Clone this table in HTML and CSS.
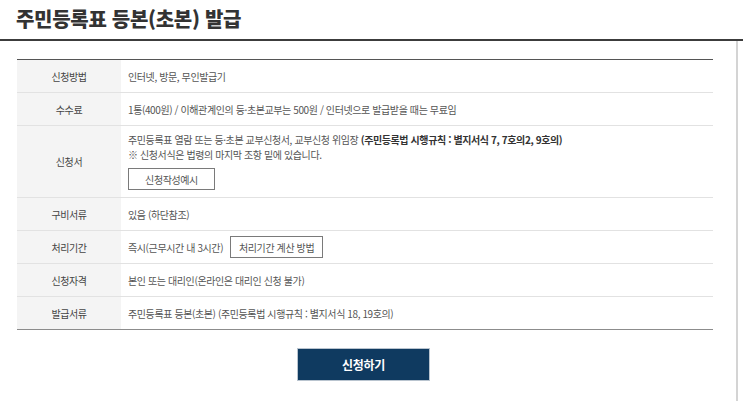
FILE: index.html
```html
<!DOCTYPE html>
<html lang="ko">
<head>
<meta charset="utf-8">
<title>주민등록표 등본(초본) 발급</title>
<link rel="stylesheet" href="styles.css">
</head>
<body>
<header class="head">
  <h1 class="title">주민등록표 등본(초본) 발급</h1>
</header>
<main class="body">
  <div class="table">
    <div class="row">
      <div class="th">신청방법</div>
      <div class="td">인터넷, 방문, 무인발급기</div>
    </div>
    <div class="row">
      <div class="th">수수료</div>
      <div class="td">1통(400원) / 이해관계인의 등·초본교부는 500원 / 인터넷으로 발급받을 때는 무료임</div>
    </div>
    <div class="row">
      <div class="th">신청서</div>
      <div class="td td-multi">
        <p class="line">주민등록표 열람 또는 등·초본 교부신청서, 교부신청 위임장 <b class="strong">(주민등록법 시행규칙 : 별지서식 7, 7호의2, 9호의)</b></p>
        <p class="line">※ 신청서식은 법령의 마지막 조항 밑에 있습니다.</p>
        <button class="btn btn-sample" type="button">신청작성예시</button>
      </div>
    </div>
    <div class="row">
      <div class="th">구비서류</div>
      <div class="td">있음 (하단참조)</div>
    </div>
    <div class="row">
      <div class="th">처리기간</div>
      <div class="td">즉시(근무시간 내 3시간)<button class="btn btn-calc" type="button">처리기간 계산 방법</button></div>
    </div>
    <div class="row">
      <div class="th">신청자격</div>
      <div class="td">본인 또는 대리인(온라인은 대리인 신청 불가)</div>
    </div>
    <div class="row row-last">
      <div class="th">발급서류</div>
      <div class="td">주민등록표 등본(초본) (주민등록법 시행규칙 : 별지서식 18, 19호의)</div>
    </div>
  </div>
  <div class="actions">
    <button class="submit" type="button">신청하기</button>
  </div>
</main>
</body>
</html>
```
FILE: styles.css
```css
* { box-sizing: border-box; }
html, body { margin: 0; padding: 0; background: #fff; }
body {
  font-family: "Noto Sans CJK KR", "Noto Sans", sans-serif;
  color: #555;
  width: 743px;
  height: 401px;
  overflow: hidden;
}
.head {
  height: 41px;
  padding: 7px 0 0 16px;
  border-bottom: 2px solid #3c3c3c;
}
.title {
  margin: 0;
  font-size: 20px;
  line-height: 24px;
  font-weight: 900;
  letter-spacing: -0.3px;
  color: #333;
}
.body {
  width: 738px;
  height: 360px;
  padding: 18px 0 0 17px;
  border-right: 2px solid #d4d4d4;
}
.table {
  width: 696px;
  border-top: 1px solid #555;
}
.row {
  display: grid;
  grid-template-columns: 104px 1fr;
  border-bottom: 1px solid #e2e2e2;
}
.row-last { border-bottom: 1px solid #8c8c8c; }
.th {
  background: #f4f4f4;
  display: flex;
  align-items: center;
  justify-content: center;
  min-height: 32px;
  font-size: 10px;
  letter-spacing: -0.4px;
  color: #444;
}
.td {
  display: flex;
  align-items: center;
  min-height: 32px;
  padding: 0 0 0 7px;
  font-size: 10px;
  line-height: 15px;
  letter-spacing: -0.4px;
  color: #555;
}
.td-multi {
  display: block;
  padding: 6px 0 7px 7px;
}
.line { margin: 0; }
.strong { color: #333; font-weight: 700; }
.btn {
  font-family: inherit;
  font-size: 10px;
  letter-spacing: -0.4px;
  color: #555;
  background: #fff;
  border: 1px solid #7a7a7a;
  height: 22px;
  padding: 0;
  margin: 0;
  display: block;
}
.btn-sample { width: 87px; margin-top: 6px; }
.btn-calc { width: 93px; margin-left: 7px; display: inline-block; }
.actions {
  display: flex;
  justify-content: center;
  padding: 18px 0 0 0;
  width: 696px;
}
.submit {
  font-family: inherit;
  width: 133px;
  height: 33px;
  margin-left: -3px;
  background: #0f3a60;
  border: 1px solid #b9c4cf;
  color: #fff;
  font-size: 12px;
  font-weight: 700;
  letter-spacing: -0.3px;
  padding: 0;
}
```
